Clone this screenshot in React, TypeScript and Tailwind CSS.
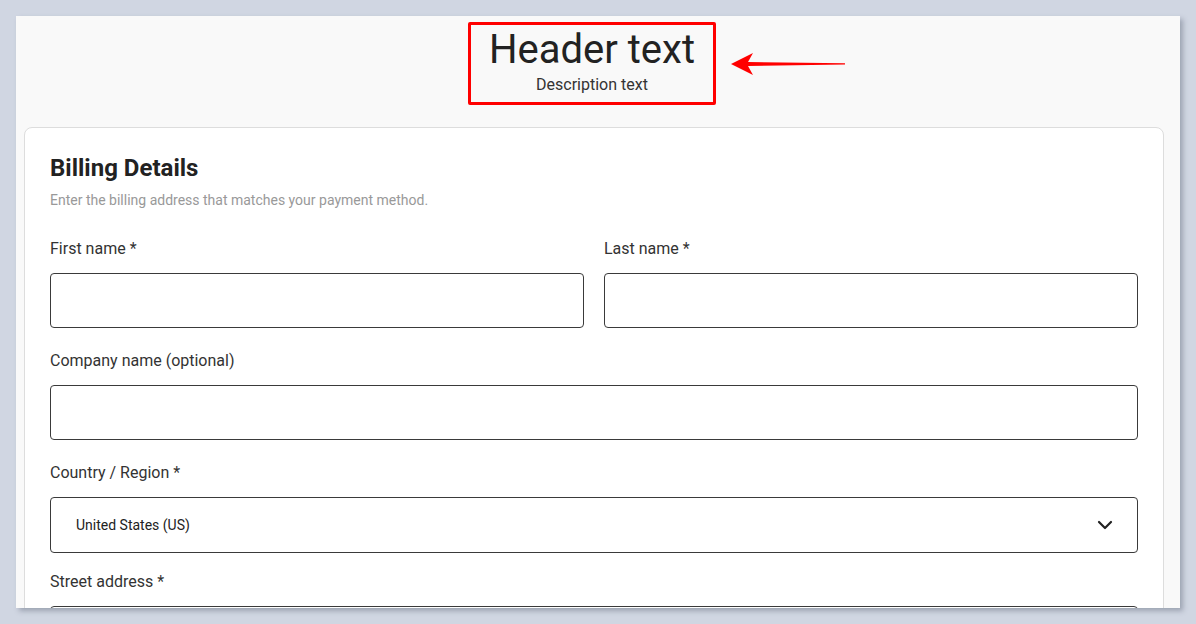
import { ChevronDown } from 'lucide-react'

function Field({ label, className = '' }: { label: string; className?: string }) {
  return (
    <div className={className}>
      <label className="block text-[16px] leading-6 text-[#333]">{label}</label>
      <input
        type="text"
        className="mt-3 block h-[55px] w-full rounded border border-[#3a3a3a] bg-white px-4 outline-none"
      />
    </div>
  )
}

function HeaderArrow() {
  return (
    <svg width="116" height="24" viewBox="0 0 116 24">
      <path d="M0 12 L22 1 L17 10 L114 11.2 L114 12.6 L17 14 L22 23 Z" fill="#f00" />
    </svg>
  )
}

export default function App() {
  return (
    <div className="h-[624px] overflow-hidden bg-[#d0d6e2] p-4 font-['Roboto',sans-serif]">
      <div className="h-[592px] overflow-hidden bg-[#f9f9f9] shadow-[3px_3px_5px_rgba(60,70,90,0.35)]">
        <div className="relative flex justify-center pr-3 pt-1.5">
          <div className="rounded-[2px] border-[3px] border-[#f00] px-[18px] pb-[5px] pt-[2px] text-center">
            <h1 className="text-[40px] leading-[46px] text-[#222]">Header text</h1>
            <p className="text-[16px] leading-6 text-[#333]">Description text</p>
          </div>
          <div className="absolute left-[715px] top-[36px]">
            <HeaderArrow />
          </div>
        </div>
        <div className="ml-2 mr-4 mt-[22px] rounded-lg border border-[#ddd] bg-white px-[25px] pt-[26px] pb-8">
          <h2 className="text-[24px] font-bold leading-7 text-[#222]">Billing Details</h2>
          <p className="mt-2 text-[14px] leading-5 text-[#999]">
            Enter the billing address that matches your payment method.
          </p>
          <div className="mt-[27px] grid grid-cols-2 gap-5">
            <Field label="First name *" />
            <Field label="Last name *" />
          </div>
          <Field label="Company name (optional)" className="mt-[21px]" />
          <div className="mt-[21px]">
            <label className="block text-[16px] leading-6 text-[#333]">Country / Region *</label>
            <div className="mt-3 flex h-[56px] items-center justify-between rounded border border-[#3a3a3a] pl-[25px] pr-[20px]">
              <span className="text-[14px] text-[#222]">United States (US)</span>
              <ChevronDown size={24} strokeWidth={2.2} className="text-[#222]" />
            </div>
          </div>
          <Field label="Street address *" className="mt-[17px]" />
        </div>
      </div>
    </div>
  )
}
